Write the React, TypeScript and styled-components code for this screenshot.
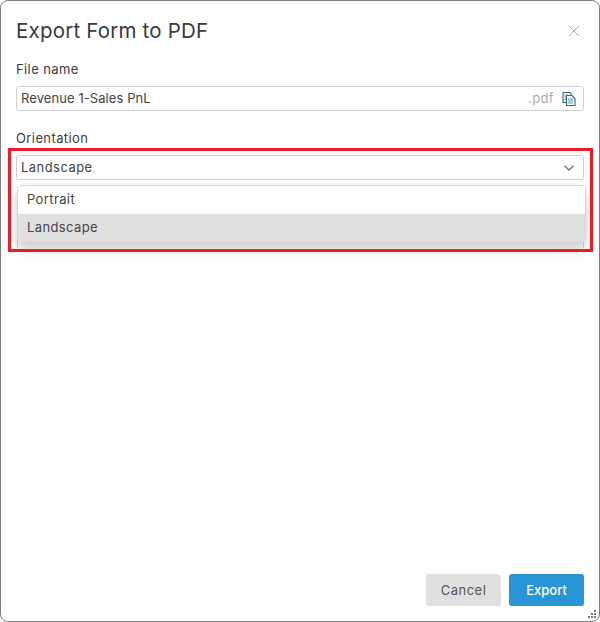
import React from "react";
import styled, { createGlobalStyle } from "styled-components";

const Global = createGlobalStyle`
  html, body { margin: 0; padding: 0; background: #fff; }
  body { font-family: Inter, "Liberation Sans", sans-serif; color: #3c3c3c; }
`;

const Dialog = styled.div`
  position: relative;
  box-sizing: border-box;
  width: 600px;
  height: 622px;
  border: 1px solid #7d7d7d;
  border-radius: 8px;
  background: #fff;
  display: flex;
  flex-direction: column;
  padding: 0 15px 15px;
  overflow: hidden;
`;

const Header = styled.div`
  display: flex;
  align-items: center;
  justify-content: space-between;
  height: 59px;
  flex: none;
`;

const Title = styled.h1`
  margin: 0;
  font-size: 20.5px;
  font-weight: 400;
  color: #3a3a3a;
  letter-spacing: 0.2px;
`;

const Close = styled.button`
  border: 0;
  background: none;
  padding: 0;
  margin-right: 4px;
  width: 12px;
  height: 12px;
  display: flex;
`;

const Label = styled.div`
  font-size: 13px;
  letter-spacing: 0.4px;
  line-height: 18px;
  color: #3c3c3c;
  margin-bottom: 8px;
`;

const Field = styled.div<{ $gap?: number }>`
  position: relative;
  box-sizing: border-box;
  height: 25px;
  width: 568px;
  border: 1px solid #cfcfcf;
  border-radius: 3px;
  display: flex;
  align-items: center;
  padding: 0 4px;
  font-size: 13px;
  line-height: 20px;
  color: #444;
  margin-bottom: ${(p) => p.$gap ?? 0}px;
`;

const FieldText = styled.span<{ $spacing: number }>`
  flex: 1;
  height: 20px;
  margin-top: -2px;
  letter-spacing: ${(p) => p.$spacing}px;
`;

const Suffix = styled.span`
  color: #aaa;
  height: 20px;
  margin-top: -2px;
  letter-spacing: 0.38px;
  margin-right: 7px;
`;

const Menu = styled.div`
  position: absolute;
  left: 16px;
  top: 184px;
  width: 569px;
  box-sizing: border-box;
  height: 58px;
  border: 1px solid #d4d4d4;
  border-radius: 5px;
  background: #fff;
  overflow: hidden;
  box-shadow: 0 6px 12px rgba(0, 0, 0, 0.2);
  z-index: 2;
`;

const Option = styled.div<{ $active?: boolean }>`
  height: 28px;
  line-height: 27px;
  padding-left: 9px;
  font-size: 13px;
  letter-spacing: 0.38px;
  color: #444;
  background: ${(p) => (p.$active ? "#e0e0e0" : "#fff")};
`;

const Behind = styled.div`
  position: absolute;
  left: 16px;
  top: 230px;
  width: 567px;
  height: 17px;
  box-sizing: border-box;
  border: 1px solid #cfcfcf;
  border-top: 0;
  border-bottom: 0;
  z-index: 1;
`;

const Highlight = styled.div`
  position: absolute;
  left: 7px;
  top: 147px;
  width: 585px;
  height: 104px;
  box-sizing: border-box;
  border: 3px solid #ed1c24;
  z-index: 3;
  pointer-events: none;
`;

const Footer = styled.div`
  margin-top: auto;
  display: flex;
  justify-content: flex-end;
  gap: 8px;
`;

const Button = styled.button<{ $primary?: boolean }>`
  width: 75px;
  height: 32px;
  border: 0;
  border-radius: 3px;
  font-family: inherit;
  font-size: 13px;
  font-weight: ${(p) => (p.$primary ? 500 : 400)};
  letter-spacing: ${(p) => (p.$primary ? 0 : 0.5)}px;
  color: ${(p) => (p.$primary ? "#fff" : "#555")};
  background: ${(p) => (p.$primary ? "#2795d6" : "#e0e0e0")};
`;

const Grip = styled.svg`
  position: absolute;
  right: 2px;
  bottom: 2px;
`;

export default function App() {
  return (
    <>
      <Global />
      <Dialog>
        <Header>
          <Title>Export Form to PDF</Title>
          <Close aria-label="Close">
            <svg width="12" height="12" viewBox="0 0 12 12" fill="none" stroke="#a8a8a8" strokeWidth="1">
              <path d="M1 1l10 10M11 1L1 11" />
            </svg>
          </Close>
        </Header>
        <Label>File name</Label>
        <Field $gap={18}>
          <FieldText $spacing={0.08}>Revenue 1-Sales PnL</FieldText>
          <Suffix>.pdf</Suffix>
          <svg width="16" height="16" viewBox="0 0 16 16" fill="none" style={{ marginRight: 2 }}>
            <path d="M10 4V2.5L9 1.5H2v10h3" stroke="#4a5a66" strokeWidth="1.1" fill="#fff" />
            <path d="M5.5 4.5H11l3 3v7H5.5z" stroke="#4a5a66" strokeWidth="1.1" fill="#fff" />
            <path d="M3.5 4h3M3.5 6h1.5M3.5 8h1.5M7 8h5M7 10h5M7 12h5" stroke="#2aa0dc" strokeWidth="1" />
          </svg>
        </Field>
        <Label>Orientation</Label>
        <Field>
          <FieldText $spacing={0.45}>Landscape</FieldText>
          <svg width="10" height="6" viewBox="0 0 10 6" fill="none" stroke="#777" strokeWidth="1.5" style={{ marginRight: 5 }}>
            <path d="M.5.8L5 5l4.5-4.2" />
          </svg>
        </Field>
        <Behind />
        <Menu>
          <Option>Portrait</Option>
          <Option $active>Landscape</Option>
        </Menu>
        <Highlight />
        <Footer>
          <Button>Cancel</Button>
          <Button $primary>Export</Button>
        </Footer>
        <Grip width="10" height="10" viewBox="0 0 10 10" fill="#777">
          <rect x="7" y="1" width="2" height="2" />
          <rect x="4" y="4" width="2" height="2" />
          <rect x="7" y="4" width="2" height="2" />
          <rect x="1" y="7" width="2" height="2" />
          <rect x="4" y="7" width="2" height="2" />
          <rect x="7" y="7" width="2" height="2" />
        </Grip>
      </Dialog>
    </>
  );
}
